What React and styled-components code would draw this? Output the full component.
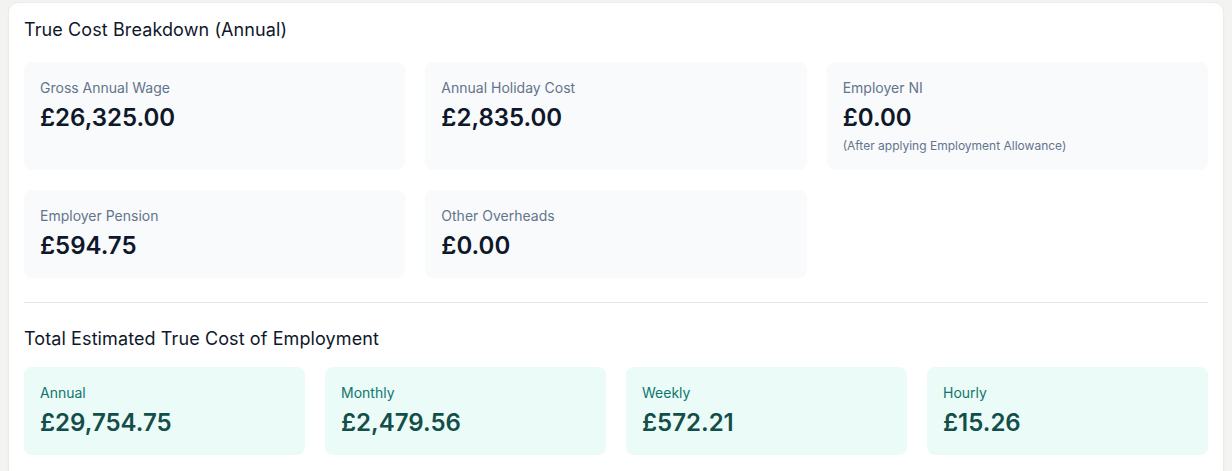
import styled, { createGlobalStyle } from "styled-components";

const GlobalStyle = createGlobalStyle`
  body {
    margin: 0;
    background: #f3f3f1;
    font-family: Inter, "Noto Sans", sans-serif;
  }
`;

const breakdown = [
  { label: "Gross Annual Wage", value: "£26,325.00" },
  { label: "Annual Holiday Cost", value: "£2,835.00" },
  { label: "Employer NI", value: "£0.00", note: "(After applying Employment Allowance)" },
  { label: "Employer Pension", value: "£594.75" },
  { label: "Other Overheads", value: "£0.00" },
];

const totals = [
  { label: "Annual", value: "£29,754.75" },
  { label: "Monthly", value: "£2,479.56" },
  { label: "Weekly", value: "£572.21" },
  { label: "Hourly", value: "£15.26" },
];

export default function App() {
  return (
    <Page>
      <GlobalStyle />
      <Card>
        <Title gap={20}>True Cost Breakdown (Annual)</Title>
        <Grid cols={3}>
          {breakdown.map((item) => (
            <Stat key={item.label}>
              <Label>{item.label}</Label>
              <Value>{item.value}</Value>
              {item.note && <Note>{item.note}</Note>}
            </Stat>
          ))}
        </Grid>
        <Divider />
        <Title gap={16}>Total Estimated True Cost of Employment</Title>
        <Grid cols={4}>
          {totals.map((item) => (
            <Stat key={item.label} accent>
              <Label accent>{item.label}</Label>
              <Value accent>{item.value}</Value>
            </Stat>
          ))}
        </Grid>
      </Card>
    </Page>
  );
}

const Page = styled.div`
  padding: 2px 8px 0;
`;

const Card = styled.div`
  background: #ffffff;
  border: 1px solid #ebebe9;
  border-radius: 10px;
  padding: 15px 15px 24px;
  box-shadow: 0 1px 2px rgba(0, 0, 0, 0.03);
`;

const Title = styled.h2`
  margin: 0 0 ${(p) => p.gap}px;
  font-size: 18px;
  line-height: 24px;
  font-weight: 400;
  letter-spacing: 0.1px;
  color: #0f172a;
`;

const Grid = styled.div`
  display: grid;
  grid-template-columns: repeat(${(p) => p.cols}, 1fr);
  gap: 20px;
`;

const Stat = styled.div`
  background: ${(p) => (p.accent ? "#ebfbf7" : "#f8fafc")};
  border-radius: 8px;
  padding: 16px;
`;

const Label = styled.div`
  font-size: 14px;
  line-height: 20px;
  margin-bottom: 4px;
  color: ${(p) => (p.accent ? "#0f766e" : "#64748b")};
`;

const Value = styled.div`
  font-size: 24px;
  line-height: 32px;
  font-weight: 600;
  color: ${(p) => (p.accent ? "#134e4a" : "#0f172a")};
`;

const Note = styled.div`
  margin-top: 4px;
  font-size: 12px;
  line-height: 16px;
  color: #64748b;
`;

const Divider = styled.hr`
  border: 0;
  border-top: 1px solid #e2e8f0;
  margin: 24px 0;
`;
